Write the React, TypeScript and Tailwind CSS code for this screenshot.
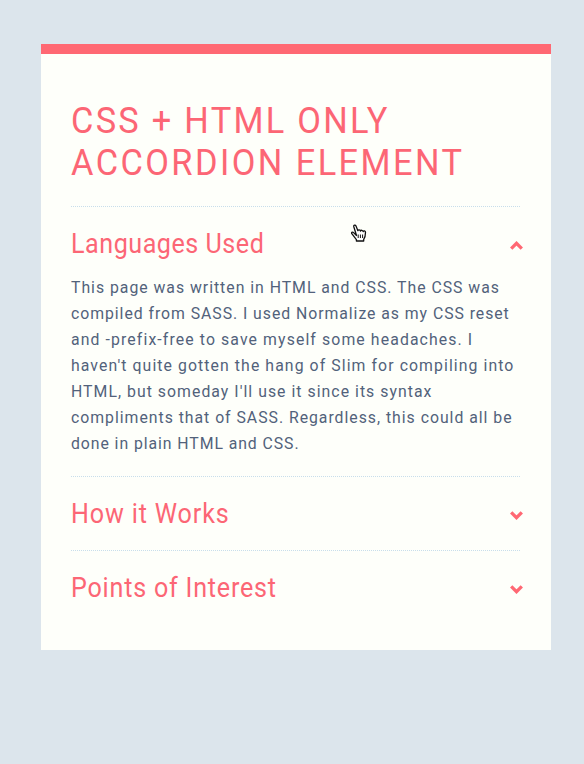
import React from "react";

const body = [
  { text: "This page was written in HTML and CSS. The CSS was", tracking: "tracking-[1.05px]" },
  { text: "compiled from SASS. I used Normalize as my CSS reset", tracking: "tracking-[1.02px]" },
  { text: "and -prefix-free to save myself some headaches. I", tracking: "tracking-[1.19px]" },
  { text: "haven't quite gotten the hang of Slim for compiling into", tracking: "tracking-[1.16px]" },
  { text: "HTML, but someday I'll use it since its syntax", tracking: "tracking-[1.11px]" },
  { text: "compliments that of SASS. Regardless, this could all be", tracking: "tracking-[1.05px]" },
  { text: "done in plain HTML and CSS.", tracking: "tracking-[1px]" },
];

function Chevron({ open = false }: { open?: boolean }) {
  return (
    <svg
      className={`-mr-[3px] mt-[3px] shrink-0 ${open ? "" : "rotate-180"}`}
      width="13"
      height="9"
      viewBox="0 0 13 9"
      fill="none"
      stroke="#ff6873"
      strokeWidth="3.3"
    >
      <path d="M1.2 7.6L6.5 2.3L11.8 7.6" />
    </svg>
  );
}

function HandCursor() {
  return (
    <svg className="absolute left-[351px] top-[224px]" width="16" height="18" viewBox="0 0 16 18">
      <path
        d="M5.5 11.5L2.6 8.6C1.4 7.4 0 8.6 1 9.9L5.4 15.6V17H12.7V15.4C14.2 13.5 14.5 11.5 14.5 8.3C14.5 6.7 12.5 6.4 12.2 7.7C12 6 9.8 5.8 9.5 7.1C9.2 5.6 7.2 5.4 6.9 6.7L5 2.1C4.4 0.6 2.4 1 2.8 2.7L5.5 11.5Z"
        fill="#fff"
        stroke="#111"
        strokeWidth="1.3"
        strokeLinejoin="round"
      />
      <path d="M7.2 10.5V14M9.4 10.5V14M11.6 10.5V14" stroke="#111" strokeWidth="1" />
    </svg>
  );
}

function Section({ title, tracking, open, children }: { title: string; tracking: string; open?: boolean; children?: React.ReactNode }) {
  return (
    <section>
      <div className="h-px bg-[repeating-linear-gradient(90deg,#c8deeb_0_1px,transparent_1px_2px)]" />
      <div className="flex h-[73px] items-center justify-between">
        <h2 className={`origin-left scale-x-93 whitespace-nowrap text-[27px] leading-[34px] text-[#fc6675] ${tracking}`}>{title}</h2>
        <Chevron open={open} />
      </div>
      {children}
    </section>
  );
}

export default function App() {
  return (
    <div className="relative h-[764px] w-[584px] bg-[#dce5ec] pl-[41px] pt-[44px] font-['Roboto',sans-serif]">
      <main className="h-[606px] w-[510px] border-t-10 border-[#ff6873] bg-[#fefffa] pl-[30px] pr-[31px] pt-[46px]">
        <h1 className="h-[106px] origin-left scale-x-93 whitespace-nowrap text-[37px] leading-[42px] text-[#fc6675]">
          <span className="block tracking-[2.42px]">CSS + HTML ONLY</span>
          <span className="block tracking-[2.59px]">ACCORDION ELEMENT</span>
        </h1>
        <Section title="Languages Used" tracking="tracking-[0.57px]" open>
          <div className="-mt-[6px] h-[202px] origin-left scale-x-93 text-[17px] leading-[26px] text-[#52627b]">
            {body.map((line) => (
              <p key={line.text} className={`whitespace-nowrap ${line.tracking}`}>{line.text}</p>
            ))}
          </div>
        </Section>
        <Section title="How it Works" tracking="tracking-[0.92px]" />
        <Section title="Points of Interest" tracking="tracking-[0.85px]" />
      </main>
      <HandCursor />
    </div>
  );
}
